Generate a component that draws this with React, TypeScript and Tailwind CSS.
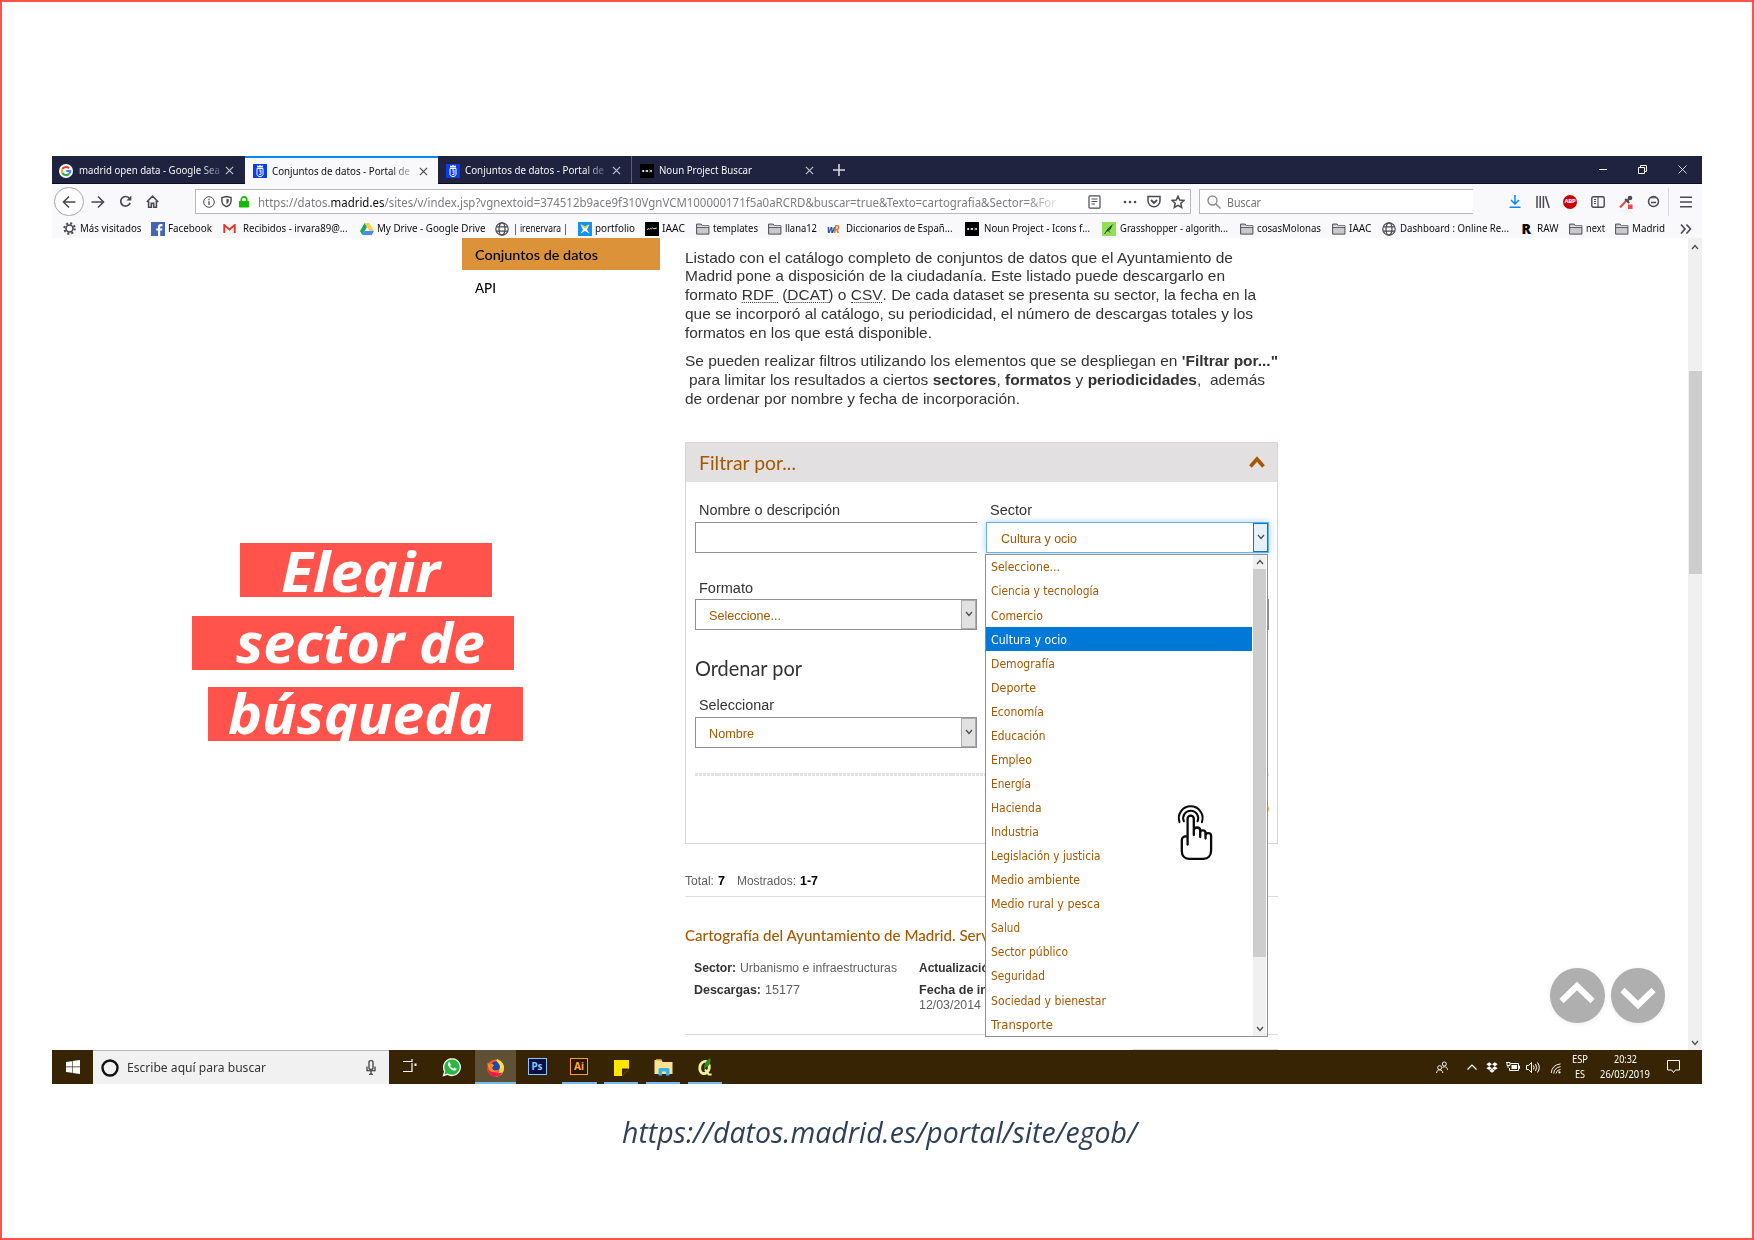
import React, { useLayoutEffect, useRef } from "react";

/* Single line of text squeezed or stretched horizontally to fill its box. */
function Fit({ className = "", children }: { className?: string; children: React.ReactNode }) {
  const outer = useRef<HTMLSpanElement>(null);
  const inner = useRef<HTMLSpanElement>(null);
  useLayoutEffect(() => {
    const o = outer.current;
    const i = inner.current;
    if (!o || !i) return;
    i.style.transform = "none";
    const k = o.getBoundingClientRect().width / i.getBoundingClientRect().width;
    i.style.transform = `scaleX(${k})`;
  }, []);
  return (
    <span ref={outer} className={`block shrink-0 whitespace-nowrap ${className}`}>
      <span ref={inner} className="inline-block origin-left whitespace-pre">
        {children}
      </span>
    </span>
  );
}

const ui = "font-['Noto_Sans','Open_Sans',sans-serif]";
const gill = "font-['Lato',sans-serif]";

/* ---------- small icons ---------- */
type IconProps = { className?: string };
const Cross = ({ className = "" }: IconProps) => (
  <svg viewBox="0 0 10 10" className={`h-[9px] w-[9px] shrink-0 ${className}`} fill="none" stroke="currentColor" strokeWidth="1.3">
    <path d="M1 1l8 8M9 1l-8 8" />
  </svg>
);
const GoogleG = () => (
  <svg viewBox="0 0 24 24" className="h-[14px] w-[14px] shrink-0">
    <circle cx="12" cy="12" r="12" fill="#fff" />
    <g fill="none" strokeWidth="3.6">
      <path d="M17.2 7.2A7.2 7.2 0 0 0 5.8 8.6" stroke="#ea4335" />
      <path d="M5.8 8.6a7.2 7.2 0 0 0 0 6.8" stroke="#fbbc05" />
      <path d="M5.8 15.4a7.2 7.2 0 0 0 11 1.9" stroke="#34a853" />
      <path d="M16.8 17.3A7.2 7.2 0 0 0 19.2 12H12.4" stroke="#4285f4" />
    </g>
  </svg>
);
const MadridIcon = () => (
  <svg viewBox="0 0 14 14" className="h-[14px] w-[14px] shrink-0">
    <rect width="14" height="14" fill="#0a3df0" />
    <path d="M4 1.200l1.200.8L7 1l1.800 1L10 1.200v2.300H4z" fill="#fff" />
    <path d="M4 4.500h6v6q0 1.500-3 2.300-3-.8-3-2.300z" fill="none" stroke="#fff" strokeWidth="1" />
    <path d="M6 6h2v2H6.500M8 8v2.500H6" fill="none" stroke="#fff" strokeWidth=".9" />
  </svg>
);
const NounIcon = () => (
  <svg viewBox="0 0 14 14" className="h-[14px] w-[14px] shrink-0">
    <rect width="14" height="14" fill="#000" />
    <circle cx="3.200" cy="7" r="1.100" fill="#fff" />
    <rect x="5.700" y="6.200" width="2.400" height="1.600" fill="#fff" />
    <path d="M9.500 6l2.500 2M12 6L9.500 8" stroke="#fff" strokeWidth=".8" />
  </svg>
);
const Folder = () => (
  <svg viewBox="0 0 14 12" className="h-[12px] w-[13.5px] shrink-0">
    <path d="M.6 11.300V.9h4.700l1.200 1.700h6.900v8.700z" fill="#c9c9cb" stroke="#4a4a4f" strokeWidth="1" />
    <path d="M.6 4.300h12.800" stroke="#4a4a4f" strokeWidth="1" />
    <path d="M1.200 3.300h12" stroke="#f9f9fb" strokeWidth=".8" />
  </svg>
);
const Globe = () => (
  <svg viewBox="0 0 14 14" className="h-[14px] w-[14px] shrink-0" fill="none" stroke="#4a4a4f" strokeWidth="1.2">
    <circle cx="7" cy="7" r="6.200" />
    <ellipse cx="7" cy="7" rx="3" ry="6.200" />
    <path d="M1.300 4.800h11.400M1.300 9.200h11.400" />
  </svg>
);
const Gear = () => (
  <svg viewBox="0 0 14 14" className="h-[13px] w-[13px] shrink-0" fill="none" stroke="#4a4a4f">
    <circle cx="7" cy="7" r="3.700" strokeWidth="1.700" />
    <circle cx="7" cy="7" r="5.600" strokeWidth="2.200" strokeDasharray="2.200 2.198" />
  </svg>
);
const FacebookIcon = () => (
  <svg viewBox="0 0 14 14" className="h-[14px] w-[14px] shrink-0">
    <rect width="14" height="14" fill="#4267b2" />
    <path d="M9.200 14V8.600h1.900l.3-2.100H9.200V5.300c0-.7.3-1.100 1.100-1.100h1.200V2.200q-.7-.1-1.600-.1c-1.900 0-2.900 1.100-2.900 2.900v1.500H5.200v2.100H7V14z" fill="#fff" />
  </svg>
);
const Gmail = () => (
  <svg viewBox="0 0 14 10" className="h-[9px] w-[13px] shrink-0">
    <rect width="14" height="10" rx=".8" fill="#f3f0ef" />
    <path d="M1.200 10V1.200L7 6l5.800-4.800V10" fill="none" stroke="#d9382b" strokeWidth="2.100" />
  </svg>
);
const Drive = () => (
  <svg viewBox="0 0 14 12" className="h-[12px] w-[14px] shrink-0">
    <path d="M4.700 0L0 8l2.300 4L7 4z" fill="#1fa463" />
    <path d="M4.700 0h4.600L14 8H9.400z" fill="#ffcf48" />
    <path d="M4.700 8H14l-2.300 4H2.300z" fill="#4688f4" />
  </svg>
);
const PortfolioIcon = () => (
  <svg viewBox="0 0 14 14" className="h-[14px] w-[14px] shrink-0">
    <rect width="14" height="14" fill="#1492f0" />
    <path d="M2.500 2.500L7 6l4.500-3.500L9 7.500l2.500 4L7 9l-4.500 2.500L5 7.500z" fill="#fff" />
    <path d="M3 2l4 2.600L11 2 9 5.500H5z" fill="#ffd23f" />
  </svg>
);
const IaacIcon = () => (
  <svg viewBox="0 0 14 14" className="h-[14px] w-[14px] shrink-0">
    <rect width="14" height="14" fill="#000" />
    <path d="M2.500 8l1-2M4.500 7.500l1-1.300 1 .6 1.200-.9 1 .9 3-.7" stroke="#fff" strokeWidth=".9" fill="none" />
  </svg>
);
const WrIcon = () => (
  <span className="flex h-[14px] w-[14px] shrink-0 items-center text-[10px] leading-none font-bold tracking-[-1.5px] text-[#2144b8] italic">
    w<span className="text-[#e07a1f]">R</span>
  </span>
);
const GrassIcon = () => (
  <svg viewBox="0 0 14 14" className="h-[14px] w-[14px] shrink-0">
    <rect width="14" height="14" fill="#92de57" />
    <path d="M2.500 12l3.800-5.500L9.800 3.500 8 7.500l-3 1.500M10 3.500l1-1M6 8.500l2 2" stroke="#23471a" strokeWidth="1" fill="#315f22" />
  </svg>
);
const RIcon = () => <span className="text-[14px] leading-none font-black text-black">R</span>;

const bookmarks: { icon: React.ReactNode; cell: string; slot: string; text: string; label: string }[] = [
  { icon: <Gear />, cell: "w-[88px]", slot: "w-[16.5px]", text: "w-[61.5px]", label: "Más visitados" },
  { icon: <FacebookIcon />, cell: "w-[71.5px]", slot: "w-[17px]", text: "w-[44px]", label: "Facebook" },
  { icon: <Gmail />, cell: "w-[137px]", slot: "w-[20px]", text: "w-[104.5px]", label: "Recibidos - irvara89@..." },
  { icon: <Drive />, cell: "w-[135.5px]", slot: "w-[17.5px]", text: "w-[108.5px]", label: "My Drive - Google Drive" },
  { icon: <Globe />, cell: "w-[83px]", slot: "w-[17.5px]", text: "w-[55px]", label: "| irenervara |" },
  { icon: <PortfolioIcon />, cell: "w-[67px]", slot: "w-[17px]", text: "w-[40px]", label: "portfolio" },
  { icon: <IaacIcon />, cell: "w-[51px]", slot: "w-[17px]", text: "w-[23px]", label: "IAAC" },
  { icon: <Folder />, cell: "w-[72px]", slot: "w-[17px]", text: "w-[45px]", label: "templates" },
  { icon: <Folder />, cell: "w-[59px]", slot: "w-[17px]", text: "w-[32px]", label: "llana12" },
  { icon: <WrIcon />, cell: "w-[138px]", slot: "w-[19px]", text: "w-[106.5px]", label: "Diccionarios de Españ..." },
  { icon: <NounIcon />, cell: "w-[137px]", slot: "w-[19px]", text: "w-[106px]", label: "Noun Project - Icons f..." },
  { icon: <GrassIcon />, cell: "w-[138px]", slot: "w-[18px]", text: "w-[108px]", label: "Grasshopper - algorith..." },
  { icon: <Folder />, cell: "w-[92px]", slot: "w-[17px]", text: "w-[64px]", label: "cosasMolonas" },
  { icon: <Folder />, cell: "w-[50px]", slot: "w-[17px]", text: "w-[22.5px]", label: "IAAC" },
  { icon: <Globe />, cell: "w-[139.5px]", slot: "w-[18px]", text: "w-[109px]", label: "Dashboard : Online Re..." },
  { icon: <RIcon />, cell: "w-[47.5px]", slot: "w-[15.5px]", text: "w-[21.5px]", label: "RAW" },
  { icon: <Folder />, cell: "w-[46px]", slot: "w-[17px]", text: "w-[19px]", label: "next" },
  { icon: <Folder />, cell: "w-[65px]", slot: "w-[17px]", text: "w-[33px]", label: "Madrid" },
];

const sectors: [string, string][] = [
  ["Seleccione...", "w-[69px]"],
  ["Ciencia y tecnología", "w-[108px]"],
  ["Comercio", "w-[52px]"],
  ["Cultura y ocio", "w-[76px]"],
  ["Demografía", "w-[64px]"],
  ["Deporte", "w-[45px]"],
  ["Economía", "w-[53px]"],
  ["Educación", "w-[54.5px]"],
  ["Empleo", "w-[41px]"],
  ["Energía", "w-[40px]"],
  ["Hacienda", "w-[50.5px]"],
  ["Industria", "w-[48px]"],
  ["Legislación y justicia", "w-[109.5px]"],
  ["Medio ambiente", "w-[89px]"],
  ["Medio rural y pesca", "w-[109px]"],
  ["Salud", "w-[29px]"],
  ["Sector público", "w-[77px]"],
  ["Seguridad", "w-[54px]"],
  ["Sociedad y bienestar", "w-[115px]"],
  ["Transporte", "w-[62px]"],
];

function TabBar() {
  const fade = "[mask-image:linear-gradient(to_right,black_86%,rgba(0,0,0,.25))]";
  return (
    <div className="flex h-[28px] items-stretch border-b border-[#0c0c1c] bg-[#202340] text-[11px] text-[#f5f5f8]">
      <div className="flex w-[193px] items-center pt-[2px] pl-[7px]">
        <GoogleG />
        <Fit className={`ml-[6px] w-[141px] ${fade}`}>madrid open data - Google Sea</Fit>
        <Cross className="ml-[5px] text-[#c0c0c8]" />
      </div>
      <div className="-mb-px flex w-[193px] items-center border-t-2 border-[#0a84ff] bg-[#f9f9fb] pl-[8px] text-[#0c0c0d]">
        <MadridIcon />
        <Fit className={`ml-[5px] w-[138px] ${fade}`}>Conjuntos de datos - Portal de</Fit>
        <Cross className="ml-[9px] text-[#4a4a4f]" />
      </div>
      <div className="flex w-[194px] items-center border-r border-[#5c5e72] pt-[2px] pl-[8px]">
        <MadridIcon />
        <Fit className={`ml-[5px] w-[139px] ${fade}`}>Conjuntos de datos - Portal de</Fit>
        <Cross className="ml-[8px] text-[#c0c0c8]" />
      </div>
      <div className="flex w-[193px] items-center pt-[2px] pl-[8px]">
        <NounIcon />
        <Fit className="ml-[5px] w-[93px]">Noun Project Buscar</Fit>
        <Cross className="ml-[53px] text-[#c0c0c8]" />
      </div>
      <div className="flex items-center pt-[1px] pl-[8px]">
        <svg viewBox="0 0 12 12" className="h-[12px] w-[12px]" stroke="#d8d8e0" strokeWidth="1.6">
          <path d="M6 0v12M0 6h12" />
        </svg>
      </div>
      <div className="ml-auto flex items-center pr-[15px]">
        <svg viewBox="0 0 9 9" className="h-[9px] w-[9px]" stroke="#fff" fill="none">
          <path d="M0 4.500h8" />
        </svg>
        <svg viewBox="0 0 9 9" className="ml-[30px] h-[9px] w-[9px]" stroke="#fff" fill="none">
          <path d="M.5 2.500h6v6h-6zM2.500 2.500v-2h6v6h-2" />
        </svg>
        <svg viewBox="0 0 9 9" className="ml-[31px] h-[9px] w-[9px]" stroke="#fff" strokeWidth=".8" fill="none">
          <path d="M.5.5l8 8M8.500.5l-8 8" />
        </svg>
      </div>
    </div>
  );
}

function NavBar() {
  return (
    <div className="flex h-[35px] items-center bg-[#f9f9fb] text-[11px] text-[#4a4a4f]">
      <div className="ml-[2px] flex h-[29px] w-[30px] items-center justify-center rounded-full border border-[#a9a9ad] bg-[#fdfdfe]">
        <svg viewBox="0 0 14 14" className="h-[14px] w-[14px]" fill="none" stroke="currentColor" strokeWidth="1.600">
          <path d="M13.500 7H1.500M7 1.500L1.500 7 7 12.500" />
        </svg>
      </div>
      <svg viewBox="0 0 14 14" className="ml-[7px] h-[14px] w-[14px]" fill="none" stroke="currentColor" strokeWidth="1.600">
        <path d="M.5 7h12M7 1.500L12.500 7 7 12.500" />
      </svg>
      <svg viewBox="0 0 14 14" className="ml-[14px] h-[13px] w-[13px]" fill="none" stroke="currentColor" strokeWidth="1.800">
        <path d="M12 8.500A5.200 5.200 0 1 1 11 3.400" />
        <path d="M13.300.5v5.300H8z" fill="currentColor" stroke="none" />
      </svg>
      <svg viewBox="0 0 14 14" className="ml-[14px] h-[13px] w-[13px]" fill="none" stroke="currentColor" strokeWidth="1.700">
        <path d="M.8 7.500L7 1.300l6.200 6.200M2.800 6.500v6.600h2.900V9h2.600v4.100h2.900V6.500" />
      </svg>
      <div className="ml-[36px] flex h-[25px] w-[996px] items-center border border-[#b9b9bd] bg-white">
        <svg viewBox="0 0 12 12" className="ml-[7px] h-[12px] w-[12px]" fill="none" stroke="currentColor">
          <circle cx="6" cy="6" r="5.300" />
          <path d="M6 5.200V9M6 2.800v1.400" strokeWidth="1.300" />
        </svg>
        <svg viewBox="0 0 12 13" className="ml-[6px] h-[13px] w-[11px]" fill="none" stroke="currentColor" strokeWidth="1.500">
          <path d="M6 1l5 1.200V6c0 3-2 5-5 6.200C3 11 1 9 1 6V2.200z" />
          <path d="M6 3.500v6c1.500-1 2.500-2 2.500-3.700V4z" fill="currentColor" stroke="none" />
        </svg>
        <svg viewBox="0 0 12 13" className="ml-[6px] h-[12px] w-[12px]">
          <path d="M3 6V4a3 3 0 0 1 6 0v2" fill="none" stroke="#12bc00" strokeWidth="1.800" />
          <rect x=".5" y="5.500" width="11" height="7" rx="1" fill="#12bc00" />
        </svg>
        <Fit className="mt-[2px] ml-[8px] w-[798px] text-[12px] text-[#7d7d81] [mask-image:linear-gradient(to_right,black_96%,rgba(0,0,0,.2))]">
          https://datos.<span className="text-[#0c0c0d]">madrid.es</span>
          /sites/v/index.jsp?vgnextoid=374512b9ace9f310VgnVCM100000171f5a0aRCRD&amp;buscar=true&amp;Texto=cartografia&amp;Sector=&amp;For
        </Fit>
        <svg viewBox="0 0 13 14" className="ml-[32px] h-[14px] w-[13px]" fill="none" stroke="currentColor" strokeWidth="1.200">
          <rect x="1" y=".8" width="11" height="12.400" rx="1" />
          <path d="M3.500 4h6M3.500 6.500h6M3.500 9h3.500" />
        </svg>
        <svg viewBox="0 0 14 4" className="ml-[22px] h-[4px] w-[14px]" fill="currentColor">
          <circle cx="2" cy="2" r="1.300" />
          <circle cx="7" cy="2" r="1.300" />
          <circle cx="12" cy="2" r="1.300" />
        </svg>
        <svg viewBox="0 0 14 13" className="ml-[10px] h-[13px] w-[14px]" fill="none" stroke="currentColor" strokeWidth="1.500">
          <path d="M1 1.500h12v4.300a6 6 0 0 1-12 0z" />
          <path d="M4 5l3 3 3-3" strokeWidth="1.800" />
        </svg>
        <svg viewBox="0 0 14 14" className="ml-[10px] h-[14px] w-[14px]" fill="none" stroke="currentColor" strokeWidth="1.500">
          <path d="M7 1.300l1.700 3.800 4.200.4-3.100 2.800.9 4.200L7 10.300l-3.700 2.200.9-4.200L1.100 5.500l4.200-.4z" />
        </svg>
      </div>
      <div className="ml-[8px] flex h-[25px] w-[274px] items-center border border-r-0 border-[#b9b9bd] bg-white">
        <svg viewBox="0 0 14 14" className="ml-[7px] h-[14px] w-[14px]" fill="none" stroke="#8a8a8e" strokeWidth="1.400">
          <circle cx="5.500" cy="5.500" r="4.500" />
          <path d="M9 9l4.500 4.500" />
        </svg>
        <Fit className="mt-[2px] ml-[6px] w-[34px] text-[12px] text-[#737378]">Buscar</Fit>
      </div>
      <svg viewBox="0 0 12 13" className="ml-[36px] h-[13px] w-[12px]" fill="none" stroke="#0a84ff" strokeWidth="1.500">
        <path d="M6 0v9M2 5l4 4 4-4M.5 12.200h11" />
      </svg>
      <svg viewBox="0 0 14 12" className="ml-[15px] h-[12px] w-[14px]" fill="none" stroke="currentColor" strokeWidth="1.500">
        <path d="M1 0v12M4.200 0v12M7.400 0v12M9.500.3L13.200 12" />
      </svg>
      <span className="ml-[13px] flex h-[14px] w-[14px] items-center justify-center rounded-full bg-[#c90000] text-[6px] font-bold tracking-[-.3px] text-white">
        ABP
      </span>
      <svg viewBox="0 0 14 12" className="ml-[14px] h-[12px] w-[14px]" fill="none" stroke="currentColor" strokeWidth="1.400">
        <rect x=".8" y=".8" width="12.400" height="10.400" rx="1.500" />
        <path d="M7 .8v10.400M3 3.500h2M3 5.500h2M3 7.500h2" strokeWidth="1.100" />
      </svg>
      <svg viewBox="0 0 14 14" className="ml-[14px] h-[14px] w-[14px]">
        <path d="M1 12.500L7.500 5.500" stroke="#d9534f" strokeWidth="2.200" />
        <path d="M6.200 4l4 4M8 6l3-3" stroke="#4a4a4f" strokeWidth="2" />
        <circle cx="11" cy="3" r="2.300" fill="#4a4a4f" />
        <rect x="9" y="9.500" width="4.500" height="4.500" fill="#f44" />
      </svg>
      <svg viewBox="0 0 13 13" className="ml-[14px] h-[13px] w-[13px]" fill="none" stroke="currentColor" strokeWidth="1.500">
        <circle cx="6.500" cy="6.500" r="5" />
        <path d="M4 7.500h5" />
        <path d="M3.800 2.800h5.400" strokeWidth="1" />
      </svg>
      <div className="ml-[8px] h-[28px] w-px bg-[#d7d7db]" />
      <svg viewBox="0 0 12 12" className="ml-[11px] h-[12px] w-[12px]" stroke="currentColor" strokeWidth="1.500">
        <path d="M0 1.200h12M0 6h12M0 10.800h12" />
      </svg>
    </div>
  );
}

function BookmarksBar() {
  return (
    <div className="flex h-[19px] items-center bg-[#f9f9fb] pl-[11px] text-[11px] text-[#0c0c0d]">
      {bookmarks.map((b, i) => (
        <div key={i} className={`flex shrink-0 items-center ${b.cell}`}>
          <span className={`flex shrink-0 items-center ${b.slot}`}>{b.icon}</span>
          <Fit className={b.text}>{b.label}</Fit>
        </div>
      ))}
      <svg viewBox="0 0 12 10" className="h-[10px] w-[12px] shrink-0" fill="none" stroke="#4a4a4f" strokeWidth="1.600">
        <path d="M1 .5L5 5 1 9.500M6.500.5l4 4.500-4 4.500" />
      </svg>
    </div>
  );
}

const Caret = ({ up = false, className = "" }: { up?: boolean; className?: string }) => (
  <svg viewBox="0 0 8 6" className={`h-[6px] w-[8px] ${className}`} fill="none" stroke="#4a4a4a" strokeWidth="1.200">
    <path d={up ? "M1 5l3-3.500L7 5" : "M1 1l3 3.500L7 1"} />
  </svg>
);

function SelectBox({ label, width }: { label: string; width: string }) {
  return (
    <div className="flex h-[31px] w-[282px] items-stretch border border-[#8f8f8f] bg-white text-[#a65700]">
      <div className="flex flex-1 items-center pt-[3px] pl-[13px] text-[12px]">
        <Fit className={width}>{label}</Fit>
      </div>
      <div className="flex w-[15px] items-center justify-center border border-[#adadad] bg-[#e1e1e1]">
        <Caret />
      </div>
    </div>
  );
}

function SectorMenu() {
  return (
    <div className="absolute top-[31px] left-[-2px] z-10 flex h-[483px] w-[283px] border border-[#8f8f8f] bg-white">
      <ul className="w-[266px] font-['DejaVu_Sans','Noto_Sans',sans-serif] text-[11.5px] text-[#a65700]">
        {sectors.map(([name, width], i) => (
          <li
            key={name}
            className={
              i === 3
                ? "flex h-[24.07px] items-center bg-[#0078d7] pt-[2px] pl-[5px] text-white"
                : "flex h-[24.07px] items-center pt-[2px] pl-[5px]"
            }
          >
            <Fit className={width}>{name}</Fit>
          </li>
        ))}
      </ul>
      <div className="ml-px flex w-[13px] flex-col items-center bg-[#f0f0f0]">
        <div className="flex h-[14px] items-center">
          <Caret up />
        </div>
        <div className="h-[388px] w-full bg-[#cdcdcd]" />
        <div className="mt-auto flex h-[14px] items-center">
          <Caret />
        </div>
      </div>
    </div>
  );
}

function TapHand() {
  return (
    <svg
      viewBox="0 0 60 70"
      className="absolute top-[793px] left-[1158px] z-20 h-[70px] w-[60px]"
      fill="none"
      stroke="#0a0a0a"
      strokeWidth="2"
      strokeLinecap="round"
      strokeLinejoin="round"
    >
      <path d="M19.500 27.200A11.900 11.900 0 1 1 41.900 27.200" />
      <path d="M23.900 26.300A7.500 7.500 0 1 1 37.500 26.300" />
      <path
        d="M27.600 49.500V23.800a3.100 3.100 0 0 1 6.200 0V40M33.800 35.500c0-4 6.400-4 6.400 0V42M40.200 38c0-3.500 5.300-3.500 5.300 0v5.500M45.500 40.800c0-3.500 5.600-3.500 5.600 0V55.500c0 5-3 8.300-7.600 8.300H29c-4.500 0-7.200-3.300-7.200-7.800V45c0-3 2.500-4 5.800-3.800"
        strokeWidth="2.300"
      />
    </svg>
  );
}

function FilterPanel() {
  return (
    <section className="mt-[33.500px] h-[402px] w-[593px] border border-[#d6d6d6] text-[14px] text-[#333]">
      <header className={`flex h-[39px] items-center justify-between bg-[#e2e0e1] pr-[12px] pl-[12.500px] text-[20px] text-[#a65700] ${gill}`}>
        <Fit className="w-[97px]">Filtrar por...</Fit>
        <svg viewBox="0 0 16 12" className="h-[12px] w-[16px]" fill="none" stroke="#a65700" strokeWidth="3.600">
          <path d="M1.500 10.500L8 3l6.500 7.500" />
        </svg>
      </header>
      <div className="flex pt-[16px] pl-[9px]">
        <div className="w-[282px]">
          <div className="flex h-[24px] items-center pt-[2px] pl-[4px]">
            <Fit className="w-[141px]">Nombre o descripción</Fit>
          </div>
          <div className="h-[31px] border border-r-0 border-[#8f8f8f] bg-white" />
          <div className="mt-[22px] flex h-[24px] items-center pt-[3px] pl-[4px]">
            <Fit className="w-[54px]">Formato</Fit>
          </div>
          <SelectBox label="Seleccione..." width="w-[72px]" />
          <div className={`mt-[24px] flex h-[28px] items-center text-[21px] ${gill}`}>
            <Fit className="w-[107px]">Ordenar por</Fit>
          </div>
          <div className="mt-[11px] flex h-[24px] items-center pt-[2px] pl-[4px]">
            <Fit className="w-[75px]">Seleccionar</Fit>
          </div>
          <SelectBox label="Nombre" width="w-[45px]" />
        </div>
        <div className="ml-[9px] w-[283px]">
          <div className="flex h-[24px] items-center pt-[2px] pl-[4px]">
            <Fit className="w-[42px]">Sector</Fit>
          </div>
          <div className="relative flex h-[31px] items-stretch border border-[#66afe9] bg-white text-[12px] text-[#a65700] shadow-[0_0_7px_rgba(102,175,233,.6)]">
            <div className="flex flex-1 items-center pt-[3px] pl-[14px]">
              <Fit className="w-[76px]">Cultura y ocio</Fit>
            </div>
            <div className="flex w-[15px] items-center justify-center border border-[#0078d7] bg-[#e5f1fb]">
              <Caret />
            </div>
            <SectorMenu />
          </div>
          <div className="mt-[46px] h-[31px] border border-[#8f8f8f] bg-white" />
        </div>
      </div>
      <div className="mt-[25px] ml-[9px] h-[3px] w-[574px] bg-[repeating-linear-gradient(to_right,#e2e2e2_0_3px,transparent_3px_3.9px)]" />
      <div className="mt-[27px] ml-auto mr-[8px] h-[12px] w-[12px] rounded-full bg-[#f5a952]" />
    </section>
  );
}

function Results() {
  return (
    <section className="w-[593px] text-[12px] text-[#5f5f5f]">
      <div className="mt-[25px] flex h-[24px] items-center">
        <Fit className="w-[29px]">Total:</Fit>
        <Fit className="ml-[4px] w-[7px] font-bold text-black">7</Fit>
        <Fit className="ml-[12px] w-[59px]">Mostrados:</Fit>
        <Fit className="ml-[4px] w-[18px] font-bold text-black">1-7</Fit>
      </div>
      <hr className="mt-[3px] border-[#dcdcdc]" />
      <div className={`mt-[25px] flex h-[26px] items-center text-[16px] font-medium text-[#a65700] ${gill}`}>
        <Fit className="w-[304px]">Cartografía del Ayuntamiento de Madrid. Serv</Fit>
      </div>
      <div className="mt-[9px] flex pl-[9px]">
        <div className="w-[225px]">
          <div className="flex h-[22px] items-center">
            <Fit className="w-[42px] font-bold text-[#333]">Sector:</Fit>
            <Fit className="ml-[4px] w-[157px]">Urbanismo e infraestructuras</Fit>
          </div>
          <div className="flex h-[22px] items-center">
            <Fit className="w-[67px] font-bold text-[#333]">Descargas:</Fit>
            <Fit className="ml-[4px] w-[35px]">15177</Fit>
          </div>
        </div>
        <div className="w-[80px]">
          <div className="flex h-[22px] items-center">
            <Fit className="w-[77px] font-bold text-[#333]">Actualización</Fit>
          </div>
          <div className="flex h-[22px] items-center">
            <Fit className="w-[69px] font-bold text-[#333]">Fecha de in</Fit>
          </div>
          <div className="-mt-[4px] flex h-[16px] items-center">
            <Fit className="w-[62px]">12/03/2014</Fit>
          </div>
        </div>
      </div>
      <hr className="mt-[21px] border-[#dcdcdc]" />
      <hr className="mt-[14px] ml-auto w-[145px] border-[#dcdcdc]" />
    </section>
  );
}

function Page() {
  const abbr = "border-b border-dotted border-[#333] leading-[15px] inline-block";
  const line = "h-[18.8px] leading-[18.8px]";
  return (
    <div className="flex h-[812px] overflow-hidden bg-white font-['Liberation_Sans',Arial,sans-serif]">
      <nav className={`ml-[410px] w-[198px] text-[14px] font-medium text-black ${gill}`}>
        <div className="flex h-[32px] items-center bg-[#db9239] pl-[13px]">
          <Fit className="w-[123px]">Conjuntos de datos</Fit>
        </div>
        <div className="flex h-[34px] items-center pl-[13px]">
          <Fit className="w-[21px]">API</Fit>
        </div>
      </nav>
      <main className="ml-[25px] w-[594px] pt-[10.500px]">
        <div className="text-[15px] text-[#333]">
          <Fit className={`w-[548px] ${line}`}>Listado con el catálogo completo de conjuntos de datos que el Ayuntamiento de</Fit>
          <Fit className={`w-[540px] ${line}`}>Madrid pone a disposición de la ciudadanía. Este listado puede descargarlo en</Fit>
          <Fit className={`w-[571px] ${line}`}>
            formato <span className={abbr}>RDF </span> (<span className={abbr}>DCAT</span>) o <span className={abbr}>CSV</span>. De cada dataset se presenta su sector, la fecha en la
          </Fit>
          <Fit className={`w-[568px] ${line}`}>que se incorporó al catálogo, su periodicidad, el número de descargas totales y los</Fit>
          <Fit className={`w-[247px] ${line}`}>formatos en los que está disponible.</Fit>
        </div>
        <div className="mt-[9.6px] text-[15px] text-[#333]">
          <Fit className={`w-[593px] ${line}`}>
            Se pueden realizar filtros utilizando los elementos que se despliegan en <b>'Filtrar por..."</b>
          </Fit>
          <Fit className={`ml-[4px] w-[576px] ${line}`}>
            para limitar los resultados a ciertos <b>sectores</b>, <b>formatos</b> y <b>periodicidades</b>,&nbsp; además
          </Fit>
          <Fit className={`w-[335px] ${line}`}>de ordenar por nombre y fecha de incorporación.</Fit>
        </div>
        <FilterPanel />
        <Results />
      </main>
      <div className="mt-[730px] ml-[271px] flex h-[55px] gap-[6px]">
        <div className="flex h-[55px] w-[54.5px] items-center justify-center rounded-full bg-[#afafaf] shadow-[0_1px_5px_rgba(0,0,0,.08)]">
          <svg viewBox="0 0 36 24" className="-mt-[5px] h-[24px] w-[36px]" fill="none" stroke="#fff" strokeWidth="6">
            <path d="M2.500 20L18 5l15.500 15" />
          </svg>
        </div>
        <div className="flex h-[55px] w-[54.5px] items-center justify-center rounded-full bg-[#afafaf] shadow-[0_1px_5px_rgba(0,0,0,.08)]">
          <svg viewBox="0 0 36 24" className="mt-[5px] h-[24px] w-[36px]" fill="none" stroke="#fff" strokeWidth="6">
            <path d="M2.500 4L18 19 33.500 4" />
          </svg>
        </div>
      </div>
      <div className="ml-auto flex w-[14px] flex-col items-center bg-[#f0f0f0]">
        <Caret up className="mt-[6px] shrink-0" />
        <div className="mt-[121px] h-[203px] w-[13px] shrink-0 bg-[#cdcdcd]" />
        <Caret className="mt-auto mb-[4px] shrink-0" />
      </div>
    </div>
  );
}

function AppSlot({ width, active = false, running = false, bar = "w-[34px]", children }: { width: string; active?: boolean; running?: boolean; bar?: string; children: React.ReactNode }) {
  return (
    <div className={`flex h-[34px] flex-col items-center ${width} ${active ? "bg-[#5f5136]" : ""}`}>
      <div className="flex h-[32px] items-center justify-center pt-[2px]">{children}</div>
      {running && <div className={`h-[2px] bg-[#76b9ed] ${bar}`} />}
    </div>
  );
}

function Taskbar() {
  return (
    <div className="flex h-[34px] items-center bg-[#372405] text-[11px] text-white">
      <div className="flex w-[41px] items-center justify-center">
        <svg viewBox="0 0 14 14" className="h-[14px] w-[14px]" fill="#fff">
          <path d="M0 2l6-.8v5.400H0zM6.600 1.100L14 0v6.600H6.600zM0 7.300h6v5.400L0 11.900zM6.600 7.300H14V14l-7.400-1.100z" />
        </svg>
      </div>
      <div className="flex h-[34px] w-[296px] items-center border-t border-[#b9b9b6] bg-[#f1f1f1] text-[#333]">
        <svg viewBox="0 0 18 18" className="ml-[8px] h-[18px] w-[18px]" fill="none" stroke="#111" strokeWidth="2.400">
          <circle cx="9" cy="9" r="7.500" />
        </svg>
        <Fit className="mt-px ml-[8px] w-[139px] text-[12px]">Escribe aquí para buscar</Fit>
        <svg viewBox="0 0 10 15" className="ml-[100px] h-[15px] w-[10px]" fill="none" stroke="#222" strokeWidth="1.100">
          <rect x="3" y=".7" width="4" height="8.600" rx="1" />
          <path d="M1 6.500v4.200h8V6.500M5 10.700v3.500M3 14.200h4" />
        </svg>
      </div>
      <AppSlot width="w-[41px]">
        <svg viewBox="0 0 14 14" className="mt-[-2px] h-[14px] w-[14px]" fill="none" stroke="#fff" strokeWidth="1.200">
          <path d="M0 2.500h9M0 12.500h9M9 0v3M9 4v9" />
          <path d="M11.500 4.500h2v2.500h-2z" fill="#fff" stroke="none" />
        </svg>
      </AppSlot>
      <AppSlot width="w-[43px]">
        <svg viewBox="0 0 20 20" className="h-[20px] w-[20px]">
          <path d="M.5 19.500l1.600-5A9 9 0 1 1 5.400 17.900z" fill="#fff" />
          <path d="M2.300 17.600l1-3.600a7.700 7.700 0 1 1 2.500 2.600z" fill="#2cb742" />
          <path d="M6.800 5.300c-2.300 1.800.5 5.700 2.600 7.200 2.300 1.600 4.600 1.800 5.200-.8l-2.300-1.200-1 1.200c-1.500-.5-2.700-1.800-3.200-3.100l.8-.9-1-2.400z" fill="#fff" />
        </svg>
      </AppSlot>
      <div className="w-[2px]" />
      <AppSlot width="w-[41px]" active running bar="w-[41px]">
        <svg viewBox="0 0 20 20" className="h-[19px] w-[19px]">
          <circle cx="10" cy="10.500" r="9" fill="#ff5a24" />
          <path d="M10 1.500c5 0 9 3.500 9 9s-4 9-9 9c5-3 6-13 0-18z" fill="#ffd23c" />
          <path d="M1.200 8C1 13 4 19.500 10 19.500c3 0 6-1.500 7.500-4.500-5 2-8 1-10-2z" fill="#f5174f" />
          <circle cx="10" cy="8.800" r="5" fill="#1b46b5" />
          <path d="M1.500 5L4 6.500 7 6l1.500 2-2 2c0 3 4 4 6.500 2-1 4-9 4-10.500-1z" fill="#ff8a1c" />
          <path d="M12 1c-1 1.500-.5 3 1 4.500s2 3 1.500 5.500l4-1C18 5 15 3.500 12 1z" fill="#ffe14a" />
        </svg>
      </AppSlot>
      <AppSlot width="w-[42px]">
        <span className="mb-[2px] flex h-[17px] w-[19px] items-center justify-center border border-[#8cc5ff] bg-[#0b1040] text-[10px] leading-none font-bold text-[#8cc5ff]">Ps</span>
      </AppSlot>
      <AppSlot width="w-[42px]" running bar="w-[35px]">
        <span className="mb-[2px] flex h-[17px] w-[18px] items-center justify-center border border-[#ff9f2e] bg-[#2a1503] text-[10px] leading-none font-bold text-[#ffa63d]">Ai</span>
      </AppSlot>
      <AppSlot width="w-[42px]" running>
        <svg viewBox="0 0 15 16" className="mt-[1px] h-[16px] w-[15px]">
          <path d="M0 0h15v8.500L8 16H0z" fill="#ffe500" />
          <path d="M8 16V8.500h7z" fill="#372405" />
        </svg>
      </AppSlot>
      <AppSlot width="w-[42px]" running>
        <svg viewBox="0 0 19 17" className="h-[17px] w-[19px]">
          <path d="M.5 1h7l1.200 2h9.800v12H.5z" fill="#ffe292" />
          <path d="M2 .2h5.500v1.600H2z" fill="#f0b43c" />
          <path d="M4.500 16.500v-6q0-1.500 1.500-1.500h8q1.500 0 1.500 1.500v6H12v-4H8v4z" fill="#3bb3ee" />
        </svg>
      </AppSlot>
      <AppSlot width="w-[42px]" running>
        <svg viewBox="0 0 16 19" className="mb-[1px] h-[18px] w-[16px]" fill="none">
          <ellipse cx="7.500" cy="10" rx="5" ry="6.500" stroke="#f2ef9a" strokeWidth="3" transform="rotate(12 7.500 10)" />
          <path d="M8 12l4 5.500h3" stroke="#f2ef9a" strokeWidth="2.200" />
          <path d="M7 12C6.500 7 9 3 13.500 0 15 5 12 9 9 10z" fill="#2c8a1e" />
        </svg>
      </AppSlot>
      <div className="ml-auto flex h-[34px] items-center pr-[22px]">
        <svg viewBox="0 0 13 13" className="h-[13px] w-[12px]" fill="none" stroke="#fff">
          <circle cx="9" cy="2.700" r="2.200" />
          <circle cx="4" cy="6.700" r="2.200" />
          <path d="M.6 12.500c0-4.500 6.800-4.500 6.800 0M7 6.500c2-1.500 5.400-1 5.400 2.500" />
        </svg>
        <svg viewBox="0 0 10 6" className="ml-[19px] h-[6px] w-[10px]" fill="none" stroke="#fff" strokeWidth="1.200">
          <path d="M.5 5.500L5 1l4.500 4.500" />
        </svg>
        <svg viewBox="0 0 14 12" className="ml-[9px] h-[11px] w-[12px]" fill="#fff">
          <path d="M3.700 0L7 2.200 3.700 4.400.4 2.200zM10.300 0l3.300 2.200-3.300 2.200L7 2.200zM3.700 4.600L7 6.800 3.700 9 .4 6.800zM10.300 4.600l3.300 2.200L10.300 9 7 6.800zM7 7.600l3.200 2.200L7 12 3.800 9.800z" />
        </svg>
        <svg viewBox="0 0 14 10" className="ml-[8px] h-[10px] w-[14px]" fill="none" stroke="#fff">
          <path d="M4.500 1.500h8v7h-9V6M12.500 4h1v2.500h-1M0 .5h4v3H1v-3M2 3.500V6" />
          <rect x="5.500" y="3" width="5.500" height="4" fill="#fff" stroke="none" />
        </svg>
        <svg viewBox="0 0 14 11" className="ml-[6px] h-[11px] w-[14px]" fill="none" stroke="#fff">
          <path d="M.5 3.500h2l3-3v10l-3-3h-2zM7.500 3.500q1.200 2 0 4M9.500 2q2.200 3.500 0 7M11.500.5q3.500 5 0 10" />
        </svg>
        <svg viewBox="0 0 12 12" className="mt-[2px] ml-[10px] h-[11px] w-[12px]" fill="none" stroke="#fff">
          <path d="M.8 11Q1.500 2 11 1M3.500 11.500Q4 5 11 4M6 11.500Q6.500 7.500 11 7" />
          <circle cx="9.800" cy="10.300" r="1.200" fill="#fff" stroke="none" />
        </svg>
        <div className="ml-[9px] flex w-[17px] flex-col items-center text-[10px] leading-[15px]">
          <Fit className="w-[16px]">ESP</Fit>
          <Fit className="w-[10px]">ES</Fit>
        </div>
        <div className="ml-[12px] flex w-[50px] flex-col items-center text-[10px] leading-[15px]">
          <Fit className="w-[23px]">20:32</Fit>
          <Fit className="w-[50px]">26/03/2019</Fit>
        </div>
        <svg viewBox="0 0 13 14" className="ml-[17px] h-[14px] w-[13px]" fill="none" stroke="#fff">
          <path d="M.5.5h12v9.500H8.500L6.500 12.500 4.500 10h-4z" />
        </svg>
      </div>
    </div>
  );
}

function Callout() {
  return (
    <div className="absolute top-[541px] left-[190px] w-[340px] text-[56px] leading-[54px] font-bold text-white italic">
      <div className="ml-[48px] flex h-[54px] w-[252px] items-center bg-[#ff534b] pl-[41px]">
        <Fit className="w-[159px]">Elegir</Fit>
      </div>
      <div className="mt-[19px] flex h-[54px] w-[322px] items-center bg-[#ff534b] pb-[4px] pl-[44px]">
        <Fit className="w-[249px]">sector de</Fit>
      </div>
      <div className="mt-[17px] ml-[16px] flex h-[54px] w-[315px] items-center bg-[#ff534b] pb-[4px] pl-[20px]">
        <Fit className="w-[264px]">búsqueda</Fit>
      </div>
    </div>
  );
}

export default function App() {
  return (
    <div className={`relative h-[1240px] w-[1754px] overflow-hidden border-2 border-[#ff534b] bg-white pt-[154px] ${ui}`}>
      <div className="ml-[50px] w-[1650px]">
        <TabBar />
        <NavBar />
        <BookmarksBar />
        <Page />
        <Taskbar />
      </div>
      <div className="mt-[24px] ml-[620px] text-[29px] leading-[48px] text-[#2f4159] italic">
        <Fit className="w-[515px] font-['Open_Sans','Noto_Sans',sans-serif]">https://datos.madrid.es/portal/site/egob/</Fit>
      </div>
      <TapHand />
      <Callout />
    </div>
  );
}
